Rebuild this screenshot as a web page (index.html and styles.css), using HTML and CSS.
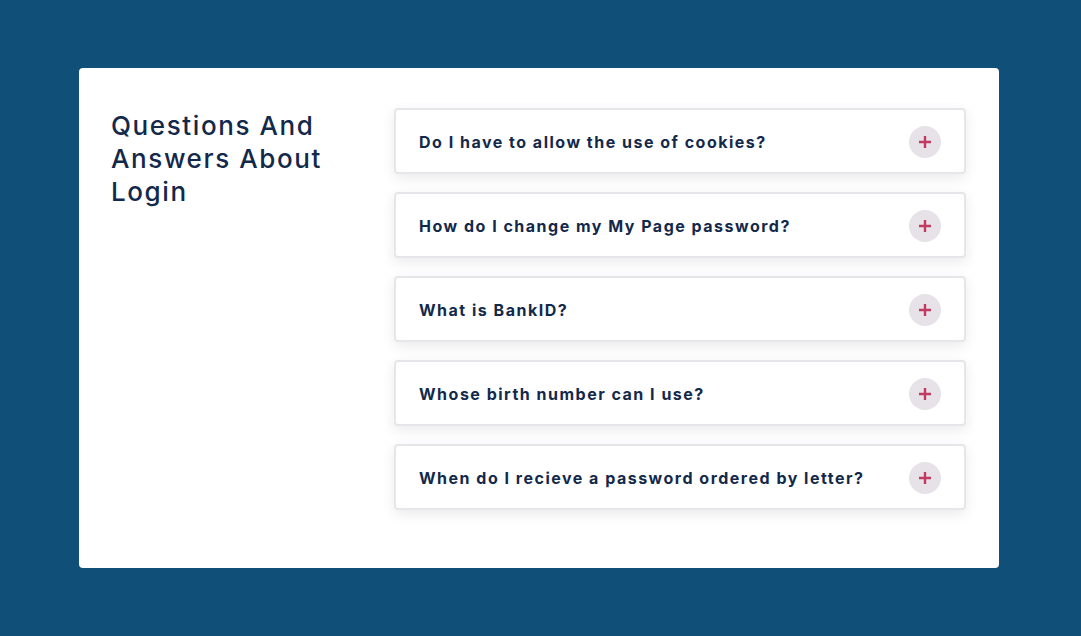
FILE: index.html
```html
<!DOCTYPE html>
<html lang="en">
<head>
<meta charset="utf-8">
<title>FAQ</title>
<link rel="stylesheet" href="styles.css">
</head>
<body>
<main class="card">
  <h1 class="title">Questions And Answers About Login</h1>
  <div class="faq">
    <div class="item"><span class="q">Do I have to allow the use of cookies?</span><span class="plus"><svg width="14" height="14" viewBox="0 0 14 14"><path d="M7 1v12M1 7h12" stroke="#c03a62" stroke-width="2.4"/></svg></span></div>
    <div class="item"><span class="q">How do I change my My Page password?</span><span class="plus"><svg width="14" height="14" viewBox="0 0 14 14"><path d="M7 1v12M1 7h12" stroke="#c03a62" stroke-width="2.4"/></svg></span></div>
    <div class="item"><span class="q">What is BankID?</span><span class="plus"><svg width="14" height="14" viewBox="0 0 14 14"><path d="M7 1v12M1 7h12" stroke="#c03a62" stroke-width="2.4"/></svg></span></div>
    <div class="item"><span class="q">Whose birth number can I use?</span><span class="plus"><svg width="14" height="14" viewBox="0 0 14 14"><path d="M7 1v12M1 7h12" stroke="#c03a62" stroke-width="2.4"/></svg></span></div>
    <div class="item"><span class="q">When do I recieve a password ordered by letter?</span><span class="plus"><svg width="14" height="14" viewBox="0 0 14 14"><path d="M7 1v12M1 7h12" stroke="#c03a62" stroke-width="2.4"/></svg></span></div>
  </div>
</main>
</body>
</html>
```
FILE: styles.css
```css
html, body { margin: 0; padding: 0; }
body {
  background: #0f4f78;
  font-family: Inter, "Liberation Sans", sans-serif;
  color: #13294b;
  min-height: 636px;
  padding: 68px 82px 0 79px;
  box-sizing: border-box;
}
.card {
  width: 920px;
  height: 500px;
  box-sizing: border-box;
  background: #fff;
  border-radius: 4px;
  padding: 40px 33px 0 32px;
  display: flex;
}
.title {
  width: 245px;
  margin: 0 38px 0 0;
  flex: none;
  padding-top: 1px;
  font-size: 26px;
  font-weight: 500;
  line-height: 33px;
  letter-spacing: 1.6px;
  color: #13294b;
}
.faq {
  flex: 1;
  display: flex;
  flex-direction: column;
  gap: 18px;
}
.item {
  height: 66px;
  box-sizing: border-box;
  border: 2px solid #e6e5ea;
  border-radius: 4px;
  background: #fff;
  box-shadow: 0 4px 14px rgba(0,0,0,0.09);
  display: flex;
  align-items: center;
  justify-content: space-between;
  padding: 1px 23px 0 23px;
}
.q {
  font-size: 16px;
  font-weight: 700;
  letter-spacing: 1.5px;
  color: #13294b;
}
.plus {
  width: 32px;
  height: 32px;
  border-radius: 50%;
  background: #e6e2e8;
  display: flex;
  align-items: center;
  justify-content: center;
}
.plus svg { display: block; }
```
